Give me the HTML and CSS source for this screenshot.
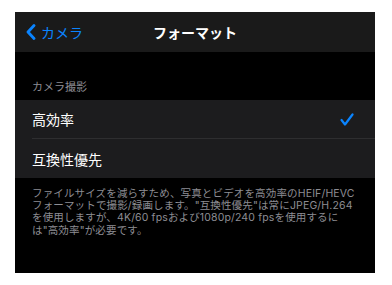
FILE: index.html
```html
<!DOCTYPE html>
<html lang="ja">
<head>
  <meta charset="UTF-8">
  <meta name="viewport" content="width=device-width, initial-scale=1.0">
  <title>フォーマット</title>
  <link rel="stylesheet" href="styles.css">
</head>
<body>
  <div class="screen">
    <header class="nav">
      <a class="back" href="#">
        <svg class="chevron" width="10" height="16" viewBox="0 0 10 16">
          <path d="M8 1.5 L2 8 L8 14.5" fill="none" stroke="#0a84ff" stroke-width="2.8" stroke-linecap="round" stroke-linejoin="round"/>
        </svg>
        <span>カメラ</span>
      </a>
      <h1 class="title">フォーマット</h1>
      <span></span>
    </header>

    <p class="section-header">カメラ撮影</p>

    <ul class="list">
      <li class="row">
        <div class="row-inner">
          <span>高効率</span>
          <svg class="check" width="14" height="13" viewBox="0 0 14 13">
            <path d="M1.5 7 L5 11.5 L12.5 1.5" fill="none" stroke="#0a84ff" stroke-width="2.2" stroke-linecap="round" stroke-linejoin="round"/>
          </svg>
        </div>
      </li>
      <li class="row">
        <div class="row-inner last">
          <span>互換性優先</span>
        </div>
      </li>
    </ul>

    <p class="footer">ファイルサイズを減らすため、写真とビデオを高効率のHEIF/HEVCフォーマットで撮影/録画します。"互換性優先"は常にJPEG/H.264を使用しますが、4K/60 fpsおよび1080p/240 fpsを使用するには"高効率"が必要です。</p>
  </div>
</body>
</html>
```

FILE: styles.css
```css
body {
  margin: 0;
  background: #fff;
  font-family: Inter, "Noto Sans CJK JP", sans-serif;
}

.screen {
  width: 360px;
  height: 261px;
  margin: 12px 0 0 15px;
  background: #000;
  overflow: hidden;
}

.nav {
  height: 40px;
  display: grid;
  grid-template-columns: 1fr auto 1fr;
  align-items: center;
  background: #1a1a1a;
}

.back {
  display: flex;
  align-items: center;
  gap: 5px;
  padding-left: 11px;
  color: #0a84ff;
  font-size: 14px;
  text-decoration: none;
}

.title {
  margin: 0;
  color: #fff;
  font-size: 14px;
  font-weight: bold;
}

.section-header {
  margin: 0;
  padding: 29px 17px 7px;
  color: #8d8d93;
  font-size: 11px;
  line-height: 12px;
}

.list {
  list-style: none;
  margin: 0;
  padding: 0;
}

.row {
  padding-left: 17px;
  background: #1c1c1e;
}

.row-inner {
  height: 38px;
  display: flex;
  align-items: center;
  justify-content: space-between;
  padding-right: 21px;
  border-bottom: 1px solid #2e2e30;
  color: #fff;
  font-size: 14px;
}

.row-inner.last {
  height: 39px;
  border-bottom: none;
}

.footer {
  margin: 0;
  padding: 10px 17px 0;
  color: #8d8d93;
  font-size: 10.5px;
  line-height: 12.2px;
  letter-spacing: 0.15px;
}
```
